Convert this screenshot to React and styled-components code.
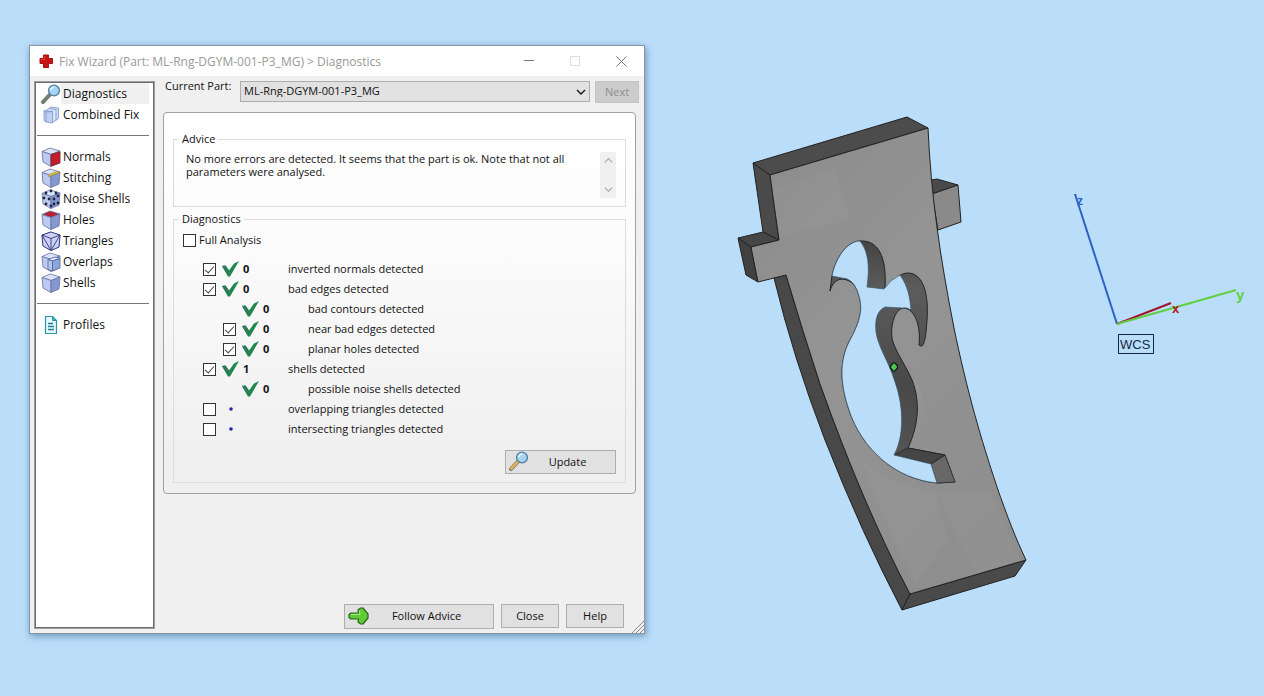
import React, { useState } from 'react';
import styled, { createGlobalStyle } from 'styled-components';

const GlobalStyle = createGlobalStyle`
  * {
    box-sizing: border-box;
  }

  body {
    margin: 0;
    background: #badefa;
    color: #111;
    font-family: 'Open Sans', 'Noto Sans', sans-serif;
    font-size: 11px;
    line-height: 13px;
  }

  button,
  select {
    font: inherit;
    color: inherit;
  }
`;

const Desktop = styled.div`
  display: grid;
  grid-template-columns: minmax(540px, 616fr) minmax(0, 619fr);
  min-height: 100vh;
  padding-left: 29px;
`;

const Dialog = styled.section`
  display: flex;
  flex-direction: column;
  margin: 45px 0 62px;
  background: #f0f0f0;
  border: 1px solid #8497a8;
  box-shadow: 1px 2px 7px rgba(30, 70, 110, 0.5);
`;

const TitleBar = styled.header`
  display: flex;
  align-items: center;
  height: 30px;
  padding-left: 8px;
  background: #fff;
`;

const Title = styled.h1`
  flex: 1;
  margin: 0 0 0 5px;
  font-size: 12px;
  font-weight: 400;
  color: #999;
  white-space: nowrap;
`;

const WindowButton = styled.button`
  display: grid;
  place-items: center;
  width: 46px;
  height: 30px;
  padding: 0;
  border: 0;
  background: none;
  color: #777;

  &:disabled {
    color: #ddd;
  }
`;

const DialogFrame = styled.div`
  position: relative;
  display: flex;
  flex: 1;
  flex-direction: column;
`;

const Body = styled.div`
  display: flex;
  flex: 1;
  gap: 8px;
  padding: 5px 5px 4px 4px;
`;

const Sidebar = styled.nav`
  flex: 0 0 121px;
  padding: 1px 5px 0 2px;
  background: #fff;
  border: 1px solid #9a9da3;
  outline: 1px solid #6d6d6d;
  outline-offset: -2px;
`;

const NavGroup = styled.ul`
  margin: 0;
  padding: 0;
  list-style: none;

  & + & {
    margin-top: 10px;
    padding-top: 10px;
    border-top: 1px solid #777;
  }
`;

const NavLink = styled.a`
  display: flex;
  align-items: center;
  gap: 2px;
  height: 21px;
  padding-left: 4px;
  font-size: 12px;
  color: inherit;
  text-decoration: none;
  white-space: nowrap;
  background: ${({ $active }) =>
    $active ? 'linear-gradient(90deg, #fff 24px, #f0f0f0 24px)' : 'none'};
`;

const Main = styled.main`
  display: flex;
  flex: 1;
  flex-direction: column;
  min-width: 0;
`;

const PartRow = styled.div`
  display: flex;
  align-items: flex-start;
  gap: 5px;
  height: 31px;
  padding-left: 2px;
`;

const PartLabel = styled.label`
  flex: 0 0 70px;
  line-height: 10px;
  white-space: nowrap;
`;

const SelectBox = styled.div`
  display: grid;
  flex: 1;
  align-items: center;

  > * {
    grid-area: 1 / 1;
  }

  > svg {
    justify-self: end;
    margin-right: 4px;
    pointer-events: none;
  }
`;

const Select = styled.select`
  appearance: none;
  width: 100%;
  height: 21px;
  padding: 0 20px 2px 3px;
  border: 1px solid #adadad;
  border-radius: 0;
  background: #e1e1e1;
`;

const Button = styled.button`
  display: flex;
  align-items: center;
  justify-content: center;
  width: ${({ $width }) => $width || 58}px;
  height: ${({ $height }) => $height || 24}px;
  padding: 0 3px 2px;
  border: 1px solid #adadad;
  background: #e1e1e1;
  white-space: nowrap;

  &:disabled {
    border-color: #c4c4c4;
    background: #ccc;
    color: #8c8c8c;
  }
`;

const ButtonText = styled.span`
  flex: 1;
  padding-right: 6px;
  text-align: center;
`;

const Panel = styled.div`
  display: flex;
  flex-direction: column;
  gap: 5px;
  margin-right: 3px;
  padding: 19px 9px 10px;
  border: 1px solid #a0a0a0;
  border-radius: 4px;
  background: linear-gradient(#fff, #fbfbfb 35%, #f0f0f0 88%);
`;

const Group = styled.fieldset`
  min-width: 0;
  margin: 0;
  padding: 0 5px 8px;
  border: 1px solid #dcdcdc;
`;

const Legend = styled.legend`
  padding: 0 3px;
  line-height: 14px;
`;

const Advice = styled.div`
  display: flex;
  justify-content: space-between;
  gap: 16px;
  padding: 6px 4px 0 7px;
`;

const AdviceText = styled.p`
  max-width: 390px;
  margin: 0;
`;

const ScrollTrack = styled.div`
  display: flex;
  flex: 0 0 16px;
  flex-direction: column;
  justify-content: space-between;
  height: 46px;
  background: #f0f0f0;
`;

const ScrollButton = styled.button`
  display: grid;
  place-items: center;
  height: 17px;
  padding: 0;
  border: 0;
  background: none;
  color: #a8a8a8;
`;

const Checks = styled.div`
  padding: 4px 4px 0;
`;

const FullAnalysis = styled.label`
  display: flex;
  align-items: center;
  gap: 3px;
  height: 20px;
  margin-bottom: 9px;

  span {
    padding-bottom: 2px;
  }
`;

const Checkbox = styled.input.attrs({ type: 'checkbox' })`
  appearance: none;
  display: flex;
  justify-content: center;
  width: 13px;
  height: 13px;
  margin: 0;
  border: 1px solid #333;
  background: #fff;

  &:checked::after {
    content: '';
    width: 4px;
    height: 8px;
    border: solid #444;
    border-width: 0 1px 1px 0;
    transform: rotate(42deg);
  }
`;

const CheckRow = styled.div`
  display: grid;
  grid-template-columns: 13px 17px 37px 1fr;
  column-gap: 6px;
  align-items: center;
  height: 20px;
  padding-left: ${({ $nested }) => ($nested ? 40 : 20)}px;
`;

const Mark = styled.span`
  grid-column: 2;
  display: grid;
  place-items: center;
`;

const Count = styled.b`
  margin-left: -2px;
  padding-bottom: 2px;
`;

const RowLabel = styled.label`
  grid-column: 4;
  padding-bottom: 2px;
  white-space: nowrap;
`;

const UpdateLine = styled.div`
  display: flex;
  justify-content: flex-end;
  margin-top: 11px;
`;

const Footer = styled.footer`
  display: flex;
  align-items: flex-start;
  justify-content: flex-end;
  gap: 7px;
  margin-top: auto;
  padding-right: 15px;
`;

const Grip = styled.svg`
  position: absolute;
  right: 0;
  bottom: 0;
`;

const Viewport = styled.svg`
  display: block;
  width: 100%;
  height: 100%;
  font-family: 'Liberation Sans', Arial, sans-serif;
`;

function Magnifier({ handle = '#6f8577' }) {
  return (
    <svg width="20" height="20" viewBox="0 0 20 20">
      <path d="M2 18 8.5 11" stroke="#7a7260" strokeWidth="4" strokeLinecap="round" />
      <path d="M2.2 17.6 8.5 11" stroke={handle} strokeWidth="2.6" strokeLinecap="round" />
      <circle cx="13" cy="6.5" r="5.4" fill="#a9d3ee" stroke="#5281a5" strokeWidth="1.4" />
      <path d="M9.5 6.2c.4-2 1.8-3 3.8-3" stroke="#e9f7ff" strokeWidth="1.6" fill="none" />
    </svg>
  );
}

function StackIcon() {
  return (
    <svg width="20" height="20" viewBox="0 0 20 20" stroke="#7d92c8" strokeWidth=".8" strokeLinejoin="round">
      <path d="M8 3.5 10 2l7.500 1v10.500L15.500 15H8z" fill="#cfdcf7" />
      <path d="M5.500 5 7.500 3.500l7.500 1V15l-2 1.500H5.500z" fill="#dbe6fb" />
      <path d="M3 5.500 11.500 6.500V18L5 17 3 15.500z" fill="#c0d1f4" />
      <path d="M3 5.500 5 7l6.500-.5M5 7v10" fill="none" />
    </svg>
  );
}

function CubeIcon({ kind }) {
  return (
    <svg width="20" height="20" viewBox="0 0 20 20" strokeLinejoin="round">
      <g stroke="#6471a3" strokeWidth=".8">
        <path d="M1 4.5 9 1l10 3-9 3.500z" fill={kind === 'holes' ? '#bb2031' : '#dce5f8'} />
        <path d="M1 4.500 10 7.500V19.500L2 15z" fill="#bccaf0" />
        <path d="M10 7.500 19 4l-1 12-8 3.500z" fill="#8797d2" />
      </g>
      {kind === 'normals' && (
        <path d="M10 7.500 19 5v11l-9 3z" fill="#c0202a" stroke="#8c1a2c" strokeWidth=".8" />
      )}
      {kind === 'stitching' && (
        <path d="M8 9V6.500l8-3 2.500 1L10 7.500z" fill="#f3d737" stroke="#98852c" strokeWidth=".7" />
      )}
      {kind === 'noise' && (
        <g fill="#1e263d">
          {[[5, 4], [10, 2], [15, 4], [3, 9], [8, 10], [5, 15], [10, 17], [13, 10], [17, 7], [13, 15], [17, 14]].map(
            ([x, y]) => <circle key={`${x}-${y}`} cx={x} cy={y} r="1.4" />
          )}
        </g>
      )}
      {kind === 'triangles' && (
        <g fill="#cdd2f4" stroke="#3e4388">
          <path d="M1 4 10 1l9 3-1 12-8 3.500L2 15z" />
          <path d="M1 4l9 3.500L19 4M10 7.500v12M1 4l9 15.500L19 4" fill="none" />
        </g>
      )}
      {kind === 'overlaps' && (
        <g stroke="#536399" strokeWidth=".8">
          <path d="M7 7.500 14 5l5 1.500L11.500 9z" fill="#dce7fb" />
          <path d="M7 7.500 11.500 9v10L7 17.500z" fill="#b5c5ee" />
          <path d="M11.500 9 19 6.500V16l-7.500 3z" fill="#8fa6dc" />
        </g>
      )}
    </svg>
  );
}

function ProfileIcon() {
  return (
    <svg width="20" height="20" viewBox="0 0 20 20">
      <path d="M4.500 1.500h7l4 4v13h-11z" fill="#e7fafd" stroke="#2496a8" strokeWidth="1.2" />
      <path d="M11.500 1.500v4h4z" fill="#48b9ca" stroke="#2496a8" />
      <path d="M7 8.500h5M7 11.500h6M7 14.500h6" stroke="#277f96" strokeWidth="1.3" />
    </svg>
  );
}

function Chevron({ up, size = 10 }) {
  return (
    <svg width={size} height={size} viewBox="0 0 10 10" fill="none" stroke="currentColor" strokeWidth="1.3">
      <path d={up ? 'M1 7l4-4 4 4' : 'M1 3l4 4 4-4'} />
    </svg>
  );
}

function GreenCheck() {
  return (
    <svg width="17" height="16" viewBox="0 0 17 16">
      <path d="M0 5 3.500 4.500 7 9.500 12 2.500 17 0 8 15.500H6z" fill="#1d8a4c" />
      <path d="M0 5 3.500 4.500 7 9.500 6.500 15.500z" fill="#34775a" />
    </svg>
  );
}

function BlueDot() {
  return (
    <svg width="4" height="4" viewBox="0 0 4 4">
      <circle cx="2" cy="2" r="1.8" fill="#2323b0" />
    </svg>
  );
}

function GreenArrow() {
  return (
    <svg width="21" height="18" viewBox="0 0 21 18">
      <path
        d="M3 6h7.500L10 3l2.500-2H15l5 6v4l-5 6h-2.500L10 15l.5-3H3l-2-1.500v-3z"
        fill="#5fcc35"
        stroke="#2b641d"
        strokeWidth="1.2"
        strokeLinejoin="round"
      />
      <path d="M3 7.500h9L11.500 3.500" fill="none" stroke="#a2ec7e" />
    </svg>
  );
}

const navGroups = [
  [
    { name: 'Diagnostics', icon: <Magnifier /> },
    { name: 'Combined Fix', icon: <StackIcon /> },
  ],
  [
    { name: 'Normals', icon: <CubeIcon kind="normals" /> },
    { name: 'Stitching', icon: <CubeIcon kind="stitching" /> },
    { name: 'Noise Shells', icon: <CubeIcon kind="noise" /> },
    { name: 'Holes', icon: <CubeIcon kind="holes" /> },
    { name: 'Triangles', icon: <CubeIcon kind="triangles" /> },
    { name: 'Overlaps', icon: <CubeIcon kind="overlaps" /> },
    { name: 'Shells', icon: <CubeIcon kind="shells" /> },
  ],
  [{ name: 'Profiles', icon: <ProfileIcon /> }],
];

const checks = [
  { id: 'normals', label: 'inverted normals detected', count: 0, box: true, on: true },
  { id: 'edges', label: 'bad edges detected', count: 0, box: true, on: true },
  { id: 'contours', label: 'bad contours detected', count: 0, nested: true },
  { id: 'near', label: 'near bad edges detected', count: 0, box: true, on: true, nested: true },
  { id: 'planar', label: 'planar holes detected', count: 0, box: true, on: true, nested: true },
  { id: 'shells', label: 'shells detected', count: 1, box: true, on: true },
  { id: 'noise', label: 'possible noise shells detected', count: 0, nested: true },
  { id: 'overlapping', label: 'overlapping triangles detected', box: true },
  { id: 'intersecting', label: 'intersecting triangles detected', box: true },
];

function PartView() {
  return (
    <Viewport viewBox="645 0 619 696" role="img" aria-label="Part in 3D view">
      <defs>
        <linearGradient id="face" x1="0" y1="0" x2=".6" y2="1">
          <stop offset="0" stopColor="#8b8b8b" />
          <stop offset=".5" stopColor="#949494" />
          <stop offset="1" stopColor="#8e8e8e" />
        </linearGradient>
        <linearGradient id="wall" x1="0" y1="0" x2="0" y2="1">
          <stop offset="0" stopColor="#444" />
          <stop offset=".2" stopColor="#5c5c5c" />
          <stop offset=".6" stopColor="#484848" />
          <stop offset="1" stopColor="#5a5a5a" />
        </linearGradient>
      </defs>

      <g stroke="#222" strokeWidth="1" strokeLinejoin="round">
        {/* outer sides */}
        <path d="M931 180 937 179 958 185 932 194z" fill="#4a4a4a" />
        <path d="M932 194 958 185 961 222 938 230z" fill="#8a8a8a" />
        <path d="M753 163 907 117 928 128 770 175z" fill="#4c4c4c" />
        <path d="M753 163 770 175 779 240 763 232z" fill="#4a4a4a" />
        <path d="M738 238 763 232 779 240 751 247z" fill="#464646" />
        <path d="M738 238 751 247 758 282 746 275z" fill="#414141" />
        <path d="M774 278 786 275Q802 329 820 384 863 505 910 594L902 610Q862 534 825 440 793 357 774 278z" fill="#484848" />
        <path d="M910 594 1026 560 1015 576 902 610z" fill="#4a4a4a" />
        {/* front face */}
        <path
          d="M770 175 928 128C931 195 940 257 954 328 967 391 981 439 997 487 1007 516 1016 539 1026 560L910 594Q863 505 820 384 802 329 786 275L758 282 751 247 779 240z"
          fill="url(#face)"
        />
      </g>

      {/* facet shading */}
      <g fill="#b0b0b0" opacity=".1">
        <path d="M772 190 835 168 850 220 780 236z" />
        <path d="M862 460Q884 486 935 491L948 540 916 582Q882 520 862 460z" />
        <path d="M938 494 958 540 977 573 1020 560 990 490z" />
        <path d="M912 366Q925 397 925 425L918 405z" />
      </g>

      {/* cut-out walls, then the opening itself */}
      <path
        d="M830 291 832 276C835 259 847 241 860 241 878 240 887 256 885 289 892 280 901 273 908 273 923 273 929 294 927 320 926 337 924 347 921 346L919 345C921 326 915 309 904 308 894 308 889 330 893 342 897 354 906 366 912 380 921 403 918 426 908 448L945 455 955 482 937 483C895 479 862 449 849 410 840 383 839 361 850 340 864 315 862 303 857 290 853 279 835 272 830 291z"
        fill="url(#wall)"
        stroke="#222"
        strokeWidth="1"
      />
      <path d="M931 464 945 455 955 482 937 483z" fill="#686868" stroke="#333" strokeWidth=".8" />
      <path d="M894 455 908 448 945 455 931 464z" fill="#454545" stroke="#222" strokeWidth=".8" />
      <path
        d="M832 276C835 259 847 241 860 241 868 251 870 265 867 287L884 289Q891 279 900 275C908 286 910 298 911 310Q907 307 902 308L885 307C876 311 875 322 876 332 878 347 889 362 895 382 904 407 904 437 894 455L931 464 937 483C895 479 862 449 849 410 840 383 839 361 850 340 864 315 862 303 857 290Q852 278 842 278z"
        fill="#badefa"
        stroke="#3d5666"
        strokeWidth=".7"
      />
      <path d="M890.500 366 893 363h2l2.500 3v2L895 371h-2l-2.500-3z" fill="#4cc64c" stroke="#111" strokeWidth="1.2" />

      {/* axes */}
      <g fill="none" strokeWidth="2">
        <path d="M1117 324 1075 194" stroke="#2d62c4" />
        <path d="M1117 324 1171 303" stroke="#a0152c" />
        <path d="M1117 324 1236 290" stroke="#62cf42" />
      </g>
      <g fontWeight="bold">
        <text x="1172" y="313" fontSize="13" fill="#b41420">x</text>
        <text x="1236" y="300" fontSize="15" fill="#62cf42">y</text>
        <text x="1077" y="205" fontSize="12" fill="#2d62c4">z</text>
      </g>
      <rect x="1118.500" y="334.500" width="35" height="19" fill="none" stroke="#142a45" />
      <text x="1120" y="349" fontSize="13" fill="#142a45">WCS</text>
    </Viewport>
  );
}

function CheckItem({ item }) {
  const [checked, setChecked] = useState(Boolean(item.on));

  return (
    <CheckRow $nested={item.nested}>
      {item.box && <Checkbox id={item.id} checked={checked} onChange={() => setChecked(!checked)} />}
      <Mark>{item.count === undefined ? <BlueDot /> : <GreenCheck />}</Mark>
      <Count>{item.count}</Count>
      <RowLabel htmlFor={item.box ? item.id : undefined}>{item.label}</RowLabel>
    </CheckRow>
  );
}

export default function App() {
  const [page, setPage] = useState('Diagnostics');

  return (
    <>
      <GlobalStyle />
      <Desktop>
        <Dialog>
          <TitleBar>
            <svg width="16" height="16" viewBox="0 0 16 16">
              <path
                d="M5.500 2h5v3.500H14.500v5H10.500V14.500h-5V10.500H2v-5h3.500z"
                fill="#c81414"
                stroke="#a81010"
                strokeLinejoin="round"
              />
              <path d="M6.500 3v3.500H3" fill="none" stroke="#e04040" />
            </svg>
            <Title>Fix Wizard (Part: ML-Rng-DGYM-001-P3_MG) &gt; Diagnostics</Title>
            <WindowButton aria-label="Minimize">
              <svg width="10" height="10" stroke="currentColor"><path d="M0 4.500h10" /></svg>
            </WindowButton>
            <WindowButton aria-label="Maximize" disabled>
              <svg width="10" height="10" fill="none" stroke="currentColor"><path d="M.5.5h9v9h-9z" /></svg>
            </WindowButton>
            <WindowButton aria-label="Close window">
              <svg width="11" height="11" stroke="currentColor"><path d="M.5.5l10 10M10.500.5l-10 10" /></svg>
            </WindowButton>
          </TitleBar>
          <DialogFrame>
            <Body>
              <Sidebar>
                {navGroups.map((group) => (
                  <NavGroup key={group[0].name}>
                    {group.map(({ name, icon }) => (
                      <li key={name}>
                        <NavLink href="#" $active={page === name} onClick={() => setPage(name)}>
                          {icon}
                          {name}
                        </NavLink>
                      </li>
                    ))}
                  </NavGroup>
                ))}
              </Sidebar>
              <Main>
                <PartRow>
                  <PartLabel htmlFor="part">Current Part:</PartLabel>
                  <SelectBox>
                    <Select id="part">
                      <option>ML-Rng-DGYM-001-P3_MG</option>
                    </Select>
                    <Chevron />
                  </SelectBox>
                  <Button $width={44} $height={22} disabled>Next</Button>
                </PartRow>
                <Panel>
                  <Group>
                    <Legend>Advice</Legend>
                    <Advice>
                      <AdviceText>
                        No more errors are detected. It seems that the part is ok. Note that not all
                        parameters were analysed.
                      </AdviceText>
                      <ScrollTrack>
                        <ScrollButton aria-label="Scroll up"><Chevron up size={9} /></ScrollButton>
                        <ScrollButton aria-label="Scroll down"><Chevron size={9} /></ScrollButton>
                      </ScrollTrack>
                    </Advice>
                  </Group>
                  <Group>
                    <Legend>Diagnostics</Legend>
                    <Checks>
                      <FullAnalysis>
                        <Checkbox />
                        <span>Full Analysis</span>
                      </FullAnalysis>
                      {checks.map((item) => (
                        <CheckItem key={item.id} item={item} />
                      ))}
                      <UpdateLine>
                        <Button $width={111}>
                          <Magnifier handle="#e0b45c" />
                          <ButtonText>Update</ButtonText>
                        </Button>
                      </UpdateLine>
                    </Checks>
                  </Group>
                </Panel>
                <Footer>
                  <Button $width={150} $height={25}>
                    <GreenArrow />
                    <ButtonText>Follow Advice</ButtonText>
                  </Button>
                  <Button>Close</Button>
                  <Button>Help</Button>
                </Footer>
              </Main>
            </Body>
            <Grip width="12" height="12" viewBox="0 0 12 12" stroke="#888">
              <path d="M0 12 12 0M4 12l8-8M8 12l4-4" />
            </Grip>
          </DialogFrame>
        </Dialog>
        <PartView />
      </Desktop>
    </>
  );
}
